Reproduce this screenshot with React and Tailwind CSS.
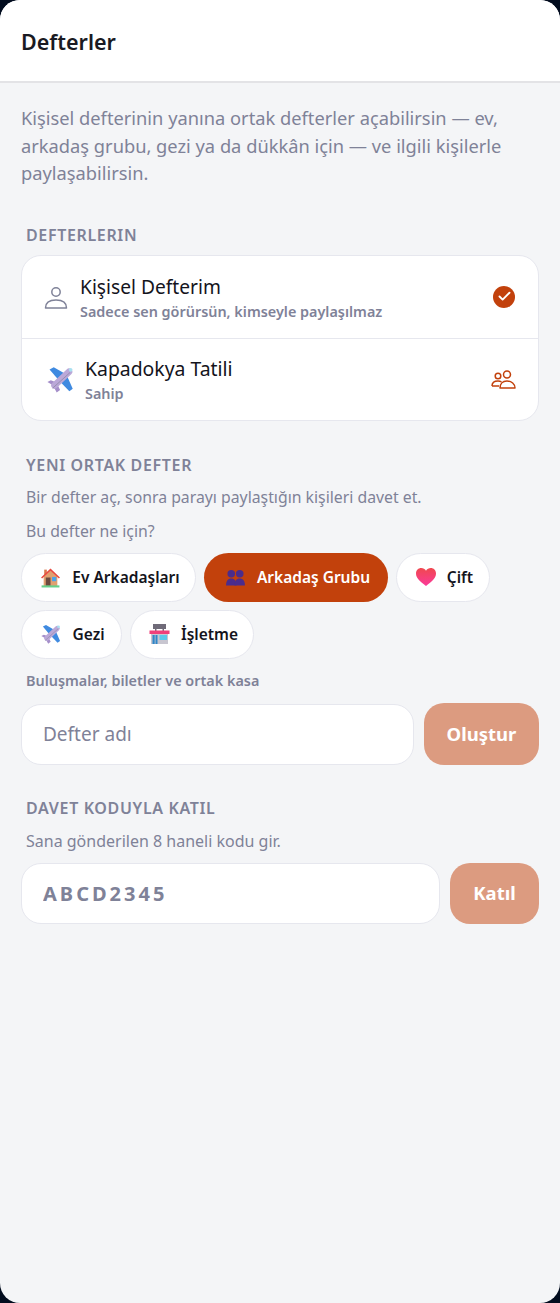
import { Check } from 'lucide-react';

const HouseEmoji = () => (
  <svg width="21" height="21" viewBox="0 0 20 20">
    <rect x="4" y="2.500" width="2.500" height="5" fill="#d9794f" />
    <path d="M3.500 9 10 3l6.500 6v9h-13z" fill="#e0a070" />
    <path d="M1 10 10 1.500 19 10l-1 1-8-7.500L2 11z" fill="#e8483f" />
    <rect x="5.500" y="10" width="4.500" height="8" fill="#6b4a3f" />
    <rect x="11.500" y="9.500" width="4" height="4" fill="#4aa3ea" />
    <rect x="1.500" y="17.500" width="17" height="2" fill="#66d08a" />
  </svg>
);

const PeopleEmoji = () => (
  <svg width="21" height="17" viewBox="0 0 21 18" fill="#4b2c8c">
    <circle cx="6" cy="5" r="4" />
    <circle cx="15" cy="5" r="4" />
    <path d="M0.500 17.500c0-5 2-7.500 5.500-7.500s5.500 2.500 5.500 7.500z" />
    <path d="M9.500 17.500c0-5 2-7.500 5.500-7.500s5.500 2.500 5.500 7.500z" />
  </svg>
);

const HeartEmoji = () => (
  <svg width="20" height="18" viewBox="0 0 20 18">
    <defs>
      <linearGradient id="heartFill" x1="0" y1="0" x2="0" y2="1">
        <stop offset="0" stopColor="#f0484f" />
        <stop offset="1" stopColor="#fb3a9a" />
      </linearGradient>
    </defs>
    <path d="M10 18C4 13.500 0 10 0 5.500 0 2.200 2.400 0 5.200 0 7.200 0 9 1 10 2.800 11 1 12.800 0 14.800 0 17.600 0 20 2.200 20 5.500 20 10 16 13.500 10 18z" fill="url(#heartFill)" />
  </svg>
);

const PlaneEmoji = ({ size = 20 }) => (
  <svg width={size} height={size} viewBox="0 0 32 32">
    <path d="M3 4 8 1.500 21 9l-7 8z" fill="#3f8ae0" />
    <path d="M15 18l8-8 7.500 17-4 3z" fill="#3f8ae0" />
    <path d="M0.500 19 4.500 17 13 20l-4 4zM8 25l4-4 3.500 7.500-4 3z" fill="#a58fca" />
    <path d="M9 23 26 7" stroke="#bba8d8" strokeWidth="8" strokeLinecap="round" />
    <path d="M7 26 27 8" stroke="#8f8aa8" strokeWidth="1" strokeLinecap="round" />
    <circle cx="28" cy="4.500" r="2.200" fill="#a8e0f0" />
  </svg>
);

const StoreEmoji = () => (
  <svg width="21" height="20" viewBox="0 0 21 20">
    <rect x="4" y="0" width="13" height="5" fill="#6f6a78" />
    <rect x="6" y="5" width="1.500" height="2" fill="#6f6a78" />
    <rect x="13.500" y="5" width="1.500" height="2" fill="#6f6a78" />
    <rect x="2" y="9" width="17" height="11" fill="#c8c6d0" />
    <rect x="0.500" y="6.500" width="20" height="3.500" fill="#f0407a" />
    <rect x="3.500" y="11" width="5" height="9" fill="#2f86c8" />
    <rect x="5.700" y="11" width="0.800" height="9" fill="#c8c6d0" />
    <rect x="10.500" y="11" width="7.500" height="5" fill="#5cc8ea" />
  </svg>
);

const kinds = [
  { icon: <HouseEmoji />, label: 'Ev Arkadaşları', width: 'w-[175px]' },
  { icon: <PeopleEmoji />, label: 'Arkadaş Grubu', width: 'w-[184px]', active: true },
  { icon: <HeartEmoji />, label: 'Çift', width: 'w-[94px]' },
  { icon: <PlaneEmoji />, label: 'Gezi', width: 'w-[101px]' },
  { icon: <StoreEmoji />, label: 'İşletme', width: 'w-[124px]' },
];

const SectionTitle = ({ children, className }) => (
  <h2 className={`pl-[5px] text-[16px] leading-[20px] font-semibold tracking-[0.65px] text-[#7f8298] ${className}`}>
    {children}
  </h2>
);

const App = () => {
  return (
    <div className="h-[1303px] w-[560px] bg-[#020c1e]" style={{ fontFamily: "'Noto Sans', sans-serif" }}>
      <div className="flex h-full flex-col overflow-hidden rounded-[20px] bg-[#f4f5f7]">
        {/* Header */}
        <header className="flex h-[83px] shrink-0 items-center border-b-2 border-[#e3e3e6] bg-white px-[21px] pt-[4px]">
          <h1 className="text-[21.500px] font-semibold text-[#1a1a22]">Defterler</h1>
        </header>

        <div className="px-[21px] pt-[21px]">
          <p className="text-[18.300px] leading-[27.500px] text-[#7f8298]">
            Kişisel defterinin yanına ortak defterler açabilirsin — ev, arkadaş grubu, gezi ya da dükkân için — ve ilgili kişilerle paylaşabilirsin.
          </p>

          <SectionTitle className="mt-[38px]">DEFTERLERIN</SectionTitle>

          {/* Ledger list */}
          <div className="mt-[10px] overflow-hidden rounded-[20px] border border-[#e6e7ee] bg-white">
            <div className="flex h-[83px] items-center border-b border-[#e6e7ee] pr-[23px] pl-[22px]">
              <svg width="24" height="24" viewBox="0 0 24 24" fill="none" stroke="#7f8298" strokeWidth="1.500">
                <circle cx="12" cy="7" r="4.200" />
                <path d="M1.500 23c0-5.500 4-8 10.500-8s10.500 2.500 10.500 8z" strokeLinejoin="round" />
              </svg>
              <div className="ml-[12px] flex-1 pt-[2px]">
                <div className="text-[19.200px] leading-[26px] text-[#14141c]">Kişisel Defterim</div>
                <div className="mt-[2px] text-[14.400px] leading-[20px] font-semibold text-[#7f8298]">Sadece sen görürsün, kimseyle paylaşılmaz</div>
              </div>
              <span className="flex h-[22px] w-[22px] items-center justify-center rounded-full bg-[#c2410c]">
                <Check size={15} strokeWidth={3} className="text-white" />
              </span>
            </div>
            <div className="flex h-[81px] items-center pr-[22px] pl-[25px]">
              <PlaneEmoji size={27} />
              <div className="ml-[11px] flex-1 pt-[2px]">
                <div className="text-[19.400px] leading-[26px] text-[#14141c]">Kapadokya Tatili</div>
                <div className="mt-[2px] text-[14.400px] leading-[20px] font-semibold text-[#7f8298]">Sahip</div>
              </div>
              <svg width="25" height="19" viewBox="0 0 25 19" fill="none" stroke="#c2410c" strokeWidth="1.500">
                <circle cx="7" cy="6" r="2.800" />
                <circle cx="16" cy="4.500" r="3.500" />
                <path d="M1 16c0-3 2-5 6-5 1.500 0 2.500.3 3.500.8" />
                <path d="M1 16h7" />
                <path d="M9 18c0-4 2.500-7 7-7s8 3 8 7z" strokeLinejoin="round" />
              </svg>
            </div>
          </div>

          <SectionTitle className="mt-[34px]">YENI ORTAK DEFTER</SectionTitle>
          <p className="mt-[12px] pl-[5px] text-[15.800px] leading-[20px] text-[#7f8298]">Bir defter aç, sonra parayı paylaştığın kişileri davet et.</p>
          <p className="mt-[14px] pl-[5px] text-[15.800px] leading-[20px] text-[#7f8298]">Bu defter ne için?</p>

          {/* Ledger kinds */}
          <div className="mt-[12px] flex flex-wrap gap-x-[8px] gap-y-[8px]">
            {kinds.map((kind) => (
              <button
                key={kind.label}
                className={`flex h-[49px] items-center justify-center gap-[11px] rounded-full pl-[3px] text-[15.500px] font-semibold ${kind.width} ${
                  kind.active ? 'bg-[#c2410c] text-white' : 'border border-[#e6e7ee] bg-white text-[#14141c]'
                }`}
              >
                {kind.icon}
                <span className="pt-[2px]">{kind.label}</span>
              </button>
            ))}
          </div>

          <p className="mt-[12px] pl-[5px] text-[14.400px] leading-[20px] font-semibold text-[#7f8298]">Buluşmalar, biletler ve ortak kasa</p>

          <div className="mt-[12px] flex items-end gap-[10px]">
            <input
              placeholder="Defter adı"
              className="h-[61px] min-w-0 flex-1 rounded-[20px] border border-[#e6e7ee] bg-white px-[21px] text-[19px] outline-none placeholder:text-[#7f8298]"
            />
            <button className="h-[62px] w-[115px] rounded-[20px] bg-[#dc9b80] text-[18.500px] font-bold text-white">Oluştur</button>
          </div>

          <SectionTitle className="mt-[33px]">DAVET KODUYLA KATIL</SectionTitle>
          <p className="mt-[13px] pl-[5px] text-[16px] leading-[20px] text-[#7f8298]">Sana gönderilen 8 haneli kodu gir.</p>

          <div className="mt-[12px] flex items-center gap-[10px]">
            <input
              placeholder="ABCD2345"
              className="h-[61px] min-w-0 flex-1 rounded-[20px] border border-[#e6e7ee] bg-white px-[21px] text-[20px] font-bold tracking-[3px] outline-none placeholder:text-[#7f8298]"
            />
            <button className="h-[61px] w-[89px] rounded-[20px] bg-[#dc9b80] text-[18.500px] font-bold text-white">Katıl</button>
          </div>
        </div>
      </div>
    </div>
  );
};

export default App;
